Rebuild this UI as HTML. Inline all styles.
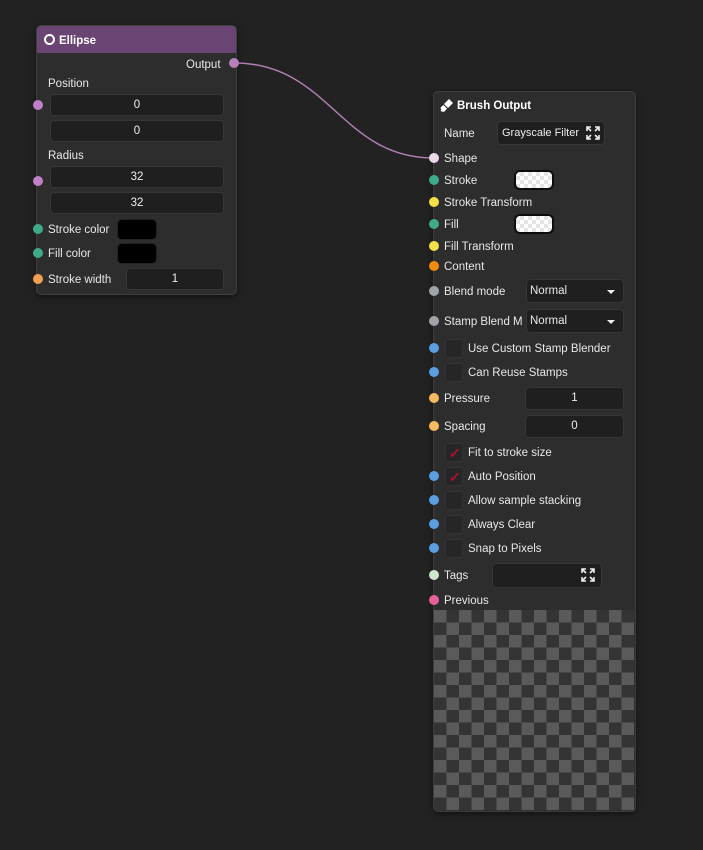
<!DOCTYPE html>
<html><head><style>
*{margin:0;padding:0;box-sizing:border-box}
body{width:703px;height:850px;background:#222222;font-family:"Liberation Sans",sans-serif;font-size:11.5px;color:#e8e8e8;position:relative;overflow:hidden}
.node{position:absolute;background:#2d2d2d;border:1px solid #3e3e3e;border-radius:5px;box-shadow:0 2px 6px rgba(0,0,0,.5)}
.t{position:absolute;white-space:nowrap;line-height:14px;margin-top:1px}
.box{position:absolute;background:#1f1f1f;border:1px solid #363636;border-radius:4px;text-align:center;line-height:21px;color:#eee}
.s{position:absolute;width:10px;height:10px;border-radius:50%}
.cb{position:absolute;width:18px;height:19px;background:#262626;border:1px solid #333;border-radius:3px}
.sw{position:absolute;border-radius:6px;border:2px solid #0c0c0c;background:#fff;background-image:linear-gradient(45deg,#e4e4e4 25%,transparent 25%,transparent 75%,#e4e4e4 75%),linear-gradient(45deg,#e4e4e4 25%,transparent 25%,transparent 75%,#e4e4e4 75%);background-size:8px 8px;background-position:0 0,4px 4px}
.dd{position:absolute;background:#1f1f1f;border:1px solid #363636;border-radius:4px;line-height:23px;padding-left:3px}
.dd:after{content:"";position:absolute;right:8px;top:10px;border-left:4px solid transparent;border-right:4px solid transparent;border-top:4px solid #eee}
.ck{position:absolute;color:#b01030;font-size:14px;font-weight:bold;line-height:14px}
</style></head><body>
<svg style="position:absolute;left:0;top:0" width="703" height="850"><path d="M234 63 C330 63 340 158 434 158" stroke="#b07fb0" stroke-width="1.5" fill="none"/></svg>

<div class="node" style="left:36px;top:25px;width:201px;height:270px">
 <div style="position:absolute;left:0;top:0;right:0;height:27px;background:#6a4472;border-radius:4px 4px 0 0"></div>
</div>
<div style="position:absolute;left:44px;top:34px;width:11px;height:11px;border:2px solid #fff;border-radius:50%"></div>
<div class="t" style="left:59px;top:33px;font-weight:bold;color:#fff">Ellipse</div>
<div class="t" style="left:186px;top:57px">Output</div>
<div class="s" style="left:229px;top:58px;background:#b67fba"></div>
<div class="t" style="left:48px;top:76px">Position</div>
<div class="s" style="left:33px;top:100px;background:#c07fc6"></div>
<div class="box" style="left:50px;top:94px;width:174px;height:22px">0</div>
<div class="box" style="left:50px;top:120px;width:174px;height:22px">0</div>
<div class="t" style="left:48px;top:148px">Radius</div>
<div class="s" style="left:33px;top:176px;background:#c07fc6"></div>
<div class="box" style="left:50px;top:166px;width:174px;height:22px">32</div>
<div class="box" style="left:50px;top:192px;width:174px;height:22px">32</div>
<div class="s" style="left:33px;top:224px;background:#3faa8a"></div>
<div class="t" style="left:48px;top:222px">Stroke color</div>
<div style="position:absolute;left:117px;top:219px;width:40px;height:21px;background:#000;border:1px solid #222;border-radius:5px"></div>
<div class="s" style="left:33px;top:248px;background:#3faa8a"></div>
<div class="t" style="left:48px;top:246px">Fill color</div>
<div style="position:absolute;left:117px;top:243px;width:40px;height:21px;background:#000;border:1px solid #222;border-radius:5px"></div>
<div class="s" style="left:33px;top:274px;background:#f0a050"></div>
<div class="t" style="left:48px;top:272px">Stroke width</div>
<div class="box" style="left:126px;top:268px;width:98px;height:22px">1</div>

<div class="node" style="left:433px;top:91px;width:203px;height:721px"></div>
<svg style="position:absolute;left:440px;top:98px" width="14" height="14" fill="#fff"><path d="M9 1l4 4-5 5-4-4z M3.5 7l3.5 3.5-2 2.5c-1 1-3 1-4 0l-0.5-0.5 1-1-1-1c0-1 1-2 3-3.5z"/></svg>
<div class="t" style="left:457px;top:98px;font-weight:bold;color:#fff">Brush Output</div>
<div class="t" style="left:444px;top:126px">Name</div>
<div class="box" style="left:497px;top:121px;width:108px;height:24px;text-align:left;padding-left:4px;line-height:22px;font-size:11px">Grayscale Filter</div>
<svg style="position:absolute;left:586px;top:126px" width="14" height="14" fill="none" stroke="#eee" stroke-width="1.6"><path d="M1 5V1h4M1 1l4 4M13 5V1H9M13 1L9 5M1 9v4h4M1 13l4-4M13 9v4H9M13 13L9 9"/></svg>
<div class="s" style="left:429px;top:153px;background:#e8d8ea"></div>
<div class="t" style="left:444px;top:151px">Shape</div>
<div class="s" style="left:429px;top:175px;background:#3faa8a"></div>
<div class="t" style="left:444px;top:173px">Stroke</div>
<div class="sw" style="left:514px;top:170px;width:40px;height:20px"></div>
<div class="s" style="left:429px;top:197px;background:#f1e04a"></div>
<div class="t" style="left:444px;top:195px">Stroke Transform</div>
<div class="s" style="left:429px;top:219px;background:#3faa8a"></div>
<div class="t" style="left:444px;top:217px">Fill</div>
<div class="sw" style="left:514px;top:214px;width:40px;height:20px"></div>
<div class="s" style="left:429px;top:241px;background:#f1e04a"></div>
<div class="t" style="left:444px;top:239px">Fill Transform</div>
<div class="s" style="left:429px;top:261px;background:#f08a10"></div>
<div class="t" style="left:444px;top:259px">Content</div>
<div class="s" style="left:429px;top:286px;background:#a0a4aa"></div>
<div class="t" style="left:444px;top:284px">Blend mode</div>
<div class="dd" style="left:526px;top:279px;width:98px;height:24px">Normal</div>
<div class="s" style="left:429px;top:316px;background:#a0a4aa"></div>
<div class="t" style="left:444px;top:314px">Stamp Blend M</div>
<div class="dd" style="left:526px;top:309px;width:98px;height:24px">Normal</div>
<div class="s" style="left:429px;top:343px;background:#5aa0e0"></div>
<div class="cb" style="left:445px;top:339px"></div>
<div class="t" style="left:468px;top:341px">Use Custom Stamp Blender</div>
<div class="s" style="left:429px;top:367px;background:#5aa0e0"></div>
<div class="cb" style="left:445px;top:363px"></div>
<div class="t" style="left:468px;top:365px">Can Reuse Stamps</div>
<div class="s" style="left:429px;top:393px;background:#f5bb5e"></div>
<div class="t" style="left:444px;top:391px">Pressure</div>
<div class="box" style="left:525px;top:387px;width:99px;height:23px">1</div>
<div class="s" style="left:429px;top:421px;background:#f5bb5e"></div>
<div class="t" style="left:444px;top:419px">Spacing</div>
<div class="box" style="left:525px;top:415px;width:99px;height:23px">0</div>
<div class="cb" style="left:445px;top:443px"></div>
<div class="ck" style="left:449px;top:446px">&#x2713;</div>
<div class="t" style="left:468px;top:445px">Fit to stroke size</div>
<div class="s" style="left:429px;top:471px;background:#5aa0e0"></div>
<div class="cb" style="left:445px;top:467px"></div>
<div class="ck" style="left:449px;top:470px">&#x2713;</div>
<div class="t" style="left:468px;top:469px">Auto Position</div>
<div class="s" style="left:429px;top:495px;background:#5aa0e0"></div>
<div class="cb" style="left:445px;top:491px"></div>
<div class="t" style="left:468px;top:493px">Allow sample stacking</div>
<div class="s" style="left:429px;top:519px;background:#5aa0e0"></div>
<div class="cb" style="left:445px;top:515px"></div>
<div class="t" style="left:468px;top:517px">Always Clear</div>
<div class="s" style="left:429px;top:543px;background:#5aa0e0"></div>
<div class="cb" style="left:445px;top:539px"></div>
<div class="t" style="left:468px;top:541px">Snap to Pixels</div>
<div class="s" style="left:429px;top:570px;background:#cfe6cf"></div>
<div class="t" style="left:444px;top:568px">Tags</div>
<div class="box" style="left:492px;top:563px;width:110px;height:25px"></div>
<svg style="position:absolute;left:581px;top:568px" width="14" height="14" fill="none" stroke="#eee" stroke-width="1.6"><path d="M1 5V1h4M1 1l4 4M13 5V1H9M13 1L9 5M1 9v4h4M1 13l4-4M13 9v4H9M13 13L9 9"/></svg>
<div class="s" style="left:429px;top:595px;background:#e8609a"></div>
<div class="t" style="left:444px;top:593px">Previous</div>
<svg style="position:absolute;left:434px;top:610px" width="200" height="200" shape-rendering="crispEdges"><defs><pattern id="p" width="25" height="25" patternUnits="userSpaceOnUse"><rect width="25" height="25" fill="#343434"/><rect width="12.5" height="12.5" fill="#5a5a5a"/><rect x="12.5" y="12.5" width="12.5" height="12.5" fill="#5a5a5a"/></pattern></defs><rect width="200" height="200" fill="url(#p)"/></svg>
</body></html>
